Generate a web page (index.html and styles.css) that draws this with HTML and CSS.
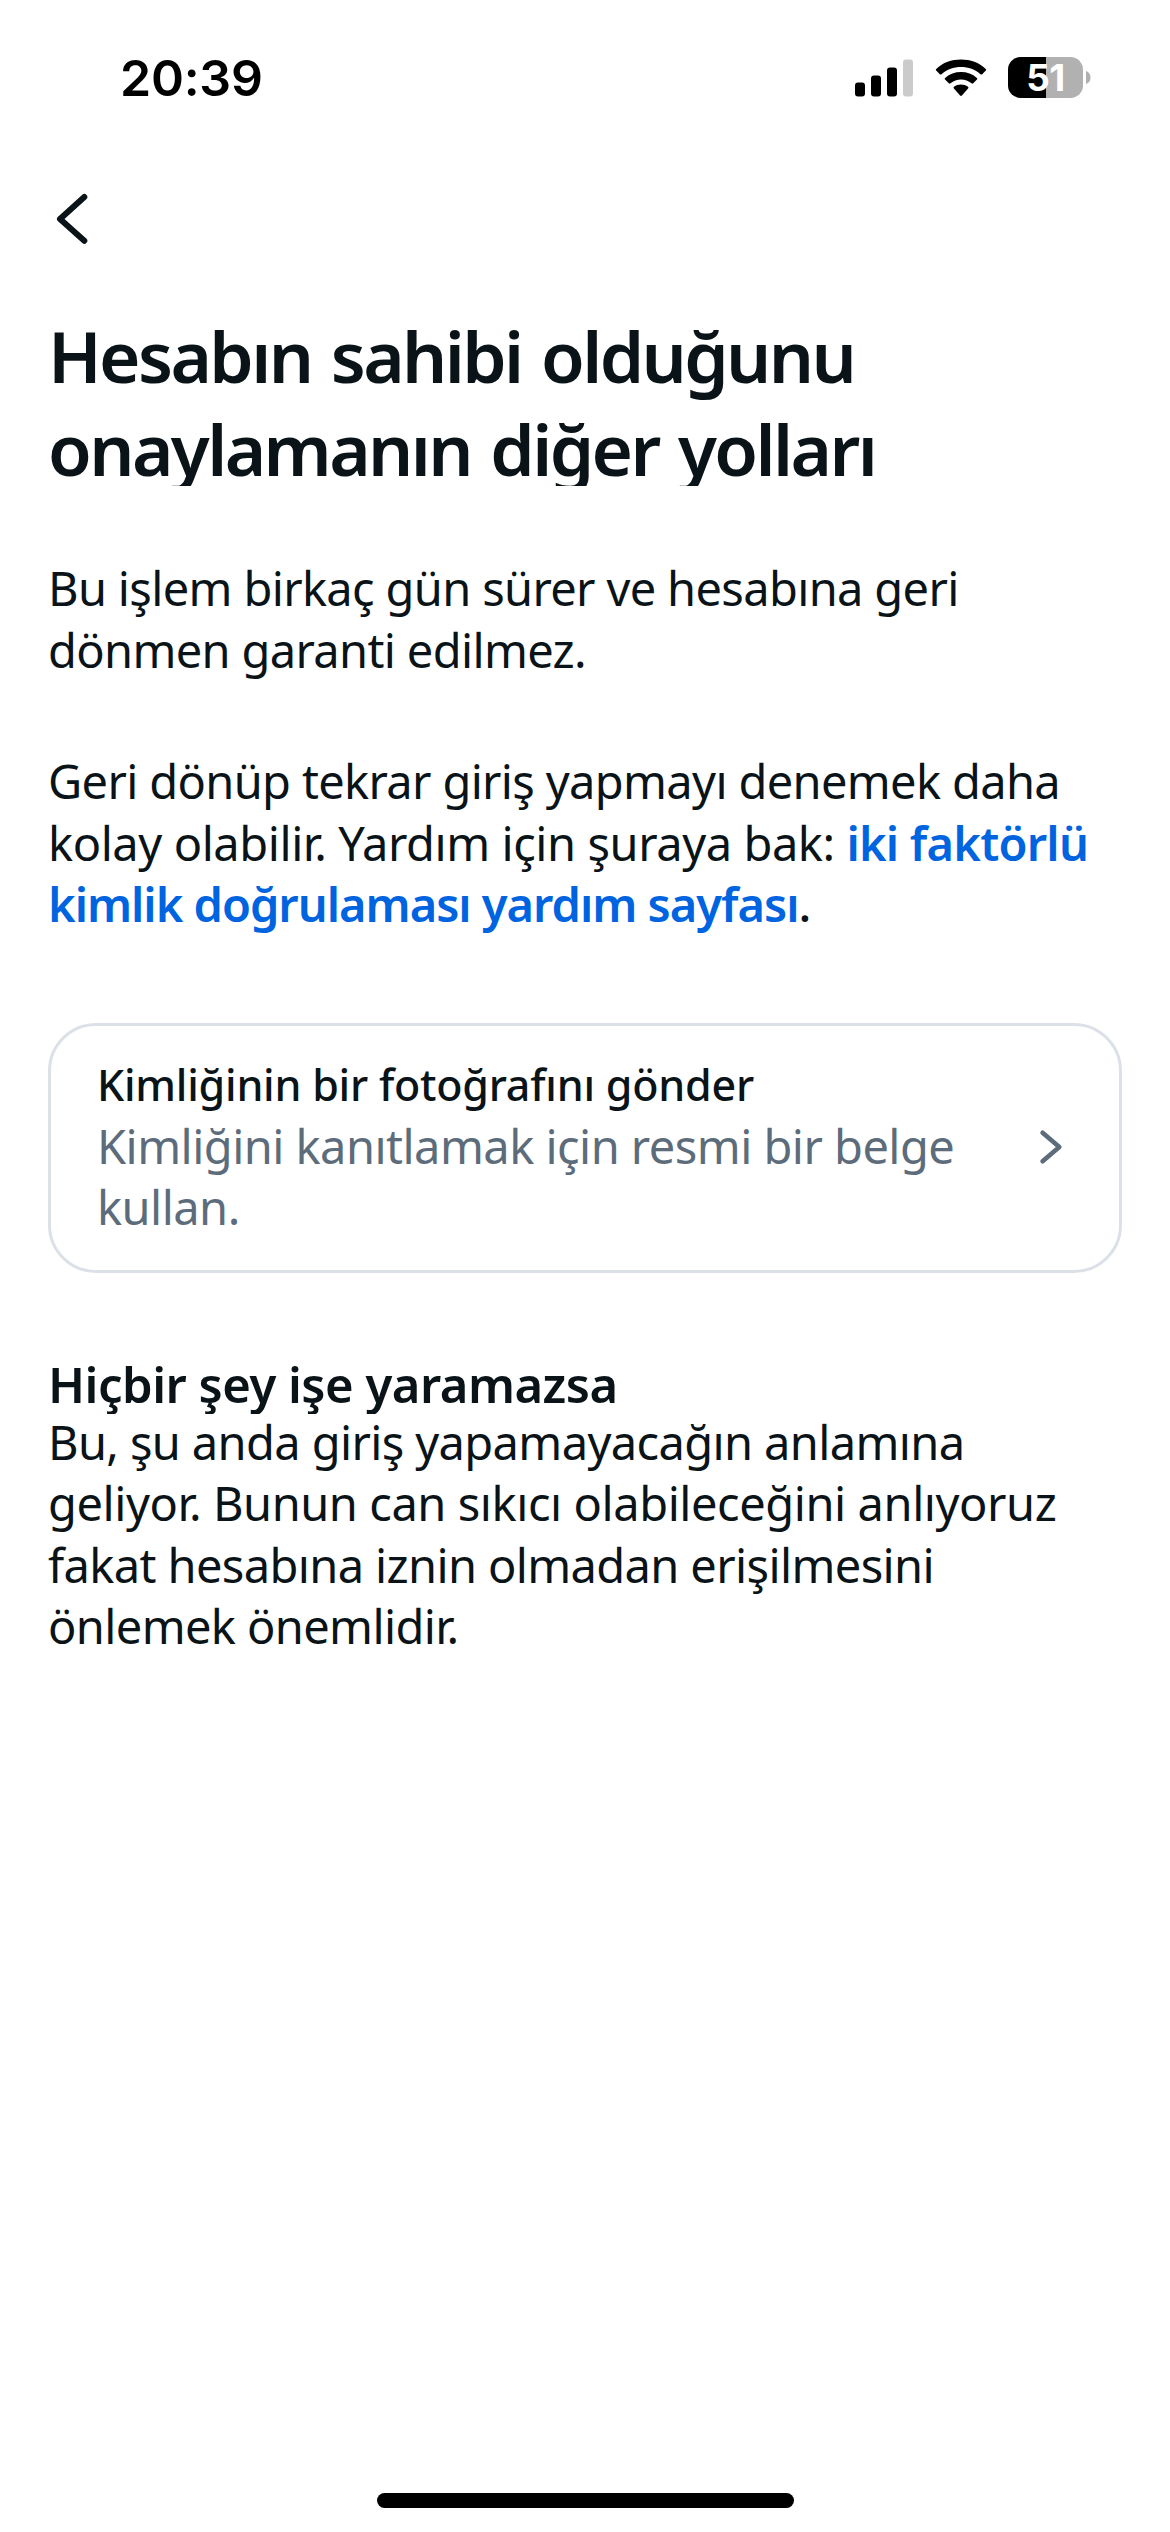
FILE: index.html
```html
<!DOCTYPE html>
<html lang="tr">
<head>
<meta charset="utf-8">
<title>Hesap doğrulama</title>
<link rel="stylesheet" href="styles.css">
</head>
<body>
<div class="screen">
  <header class="status">
    <span class="time">20:39</span>
    <div class="indicators">
      <svg class="signal" width="58" height="38" viewBox="0 0 58 38">
        <rect x="0" y="23.5" width="10" height="14" rx="3"/>
        <rect x="16" y="16.5" width="10" height="21" rx="3"/>
        <rect x="32" y="8.5" width="10" height="29" rx="3"/>
        <rect class="off" x="48" y="0.5" width="10" height="37" rx="3"/>
      </svg>
      <svg class="wifi" width="52" height="38" viewBox="0 0 52 38">
        <path d="M1.2 11.6 Q.3 10.8 1.2 9.9 C8 3.500 16.500 .5 26 .5 S44 3.500 50.800 9.900 Q51.700 10.800 50.800 11.600 L47.200 15.200 Q46.400 16 45.500 15.200 C40 10.300 33.500 7.900 26 7.900 S12 10.300 6.500 15.200 Q5.600 16 4.800 15.200Z"/>
        <path d="M10 20.600 Q9.200 19.700 10.100 18.900 C14.500 15 20 13 26 13 S37.500 15 41.900 18.900 Q42.800 19.700 42 20.600 L38.200 24.300 Q37.400 25.100 36.500 24.300 C33.500 21.800 30 20.500 26 20.500 S18.500 21.800 15.500 24.300 Q14.600 25.100 13.800 24.300Z"/>
        <path d="M18.900 29.500 Q18 28.600 19 27.800 C21 26.300 23.500 25.500 26 25.500 S31 26.300 33 27.800 Q34 28.600 33.100 29.500 L26.900 36.600 Q26 37.500 25.100 36.600Z"/>
      </svg>
      <div class="battery">
        <div class="cell">51</div>
        <svg width="5" height="13" viewBox="0 0 5 13"><path d="M0 0 Q4.500 1.500 4.500 6.500 T0 13Z"/></svg>
      </div>
    </div>
  </header>

  <nav class="nav">
    <svg width="36" height="54" viewBox="0 0 36 54"><path d="M31.300 5 L7 27 L31.300 48.700"/></svg>
  </nav>

  <main>
    <h1>Hesabın sahibi olduğunu<br>onaylamanın diğer yolları</h1>
    <p class="intro">Bu işlem birkaç gün sürer ve hesabına geri<br>dönmen garanti edilmez.</p>
    <p class="hint">Geri dönüp tekrar giriş yapmayı denemek daha<br><span class="loose">kolay olabilir. Yardım için şuraya bak: </span><a><span class="loose">iki faktörlü</span><br>kimlik doğrulaması yardım sayfası</a><b>.</b></p>

    <div class="card">
      <div class="card-text">
        <h3>Kimliğinin bir fotoğrafını gönder</h3>
        <p>Kimliğini kanıtlamak için resmi bir belge<br>kullan.</p>
      </div>
      <svg width="24" height="36" viewBox="0 0 24 36"><path d="M3.600 3.700 L20.300 18 L3.600 32.300"/></svg>
    </div>

    <h2>Hiçbir şey işe yaramazsa</h2>
    <p class="closing">Bu, şu anda giriş yapamayacağın anlamına<br><span class="loose">geliyor. Bunun can sıkıcı olabileceğini anlıyoruz</span><br>fakat hesabına iznin olmadan erişilmesini<br>önlemek önemlidir.</p>
  </main>

  <div class="home"></div>
</div>
</body>
</html>
```
FILE: styles.css
```css
* { box-sizing: border-box; margin: 0; padding: 0; }

body {
  background: #fff;
  color: #0a1317;
  font-family: "Noto Sans", "Open Sans", sans-serif;
}

svg { display: block; flex: none; }

.screen {
  width: 1170px;
  height: 2532px;
  display: flex;
  flex-direction: column;
  overflow: hidden;
}

/* Status bar */
.status {
  height: 155px;
  display: flex;
  justify-content: space-between;
  align-items: center;
  padding: 0 79px 0 120px;
  color: #000;
  font-family: Inter, "Liberation Sans", sans-serif;
}
.time {
  font-size: 50px;
  font-weight: 600;
  line-height: 60px;
  letter-spacing: -0.25px;
}
.indicators { display: flex; align-items: center; }
.signal .off { fill: #cbcbcb; }
.wifi { margin: 0 21px 0 22px; }
.battery { display: flex; align-items: center; gap: 3px; }
.cell {
  width: 75px;
  height: 41px;
  border-radius: 12.5px;
  background: linear-gradient(90deg, #000 50.5%, #b1b1b1 50.5%);
  color: #fff;
  font-size: 37px;
  font-weight: 700;
  line-height: 41px;
  letter-spacing: -0.5px;
  text-align: center;
}
.battery path { fill: #b1b1b1; }

/* Back button */
.nav { height: 154px; padding: 37px 0 0 53px; }
.nav path {
  fill: none;
  stroke: #0a1317;
  stroke-width: 6;
  stroke-linecap: round;
  stroke-linejoin: round;
}

/* Content */
main { flex: 1; padding: 0 48px; }

h1 {
  height: 177px;
  overflow: hidden;
  font-size: 71px;
  font-weight: 600;
  line-height: 93px;
  letter-spacing: -2.6px;
  word-spacing: 3.5px;
  white-space: nowrap;
}

p {
  font-size: 47px;
  line-height: 61.5px;
  letter-spacing: -0.65px;
  white-space: nowrap;
}
.loose { letter-spacing: -0.43px; }
.intro { margin-top: 72px; }
.hint { margin-top: 70px; }
.hint b { font-weight: 500; }
.hint a { color: #0064e0; font-weight: 600; letter-spacing: -1px; }
.hint a .loose { letter-spacing: -0.76px; }

.card {
  display: flex;
  justify-content: space-between;
  align-items: center;
  height: 250px;
  margin-top: 87px;
  padding: 0 56px 2px 46px;
  border: 3px solid #dce1e8;
  border-radius: 48px;
}
.card h3 {
  font-size: 43px;
  font-weight: 500;
  line-height: 61.5px;
  letter-spacing: -0.23px;
}
.card p { color: #5d6c7b; letter-spacing: -0.53px; }
.card path {
  fill: none;
  stroke: #5d6c7b;
  stroke-width: 4.6;
  stroke-linecap: round;
  stroke-linejoin: round;
}

h2 {
  height: 57px;
  margin: 84px 0 -2px;
  overflow: hidden;
  font-size: 49px;
  font-weight: 600;
  line-height: 55px;
  letter-spacing: -0.5px;
}
.closing { letter-spacing: -0.62px; }

/* Home indicator */
.home {
  width: 417px;
  height: 15px;
  margin: 0 auto 24px;
  border-radius: 8px;
  background: #000;
}
```
